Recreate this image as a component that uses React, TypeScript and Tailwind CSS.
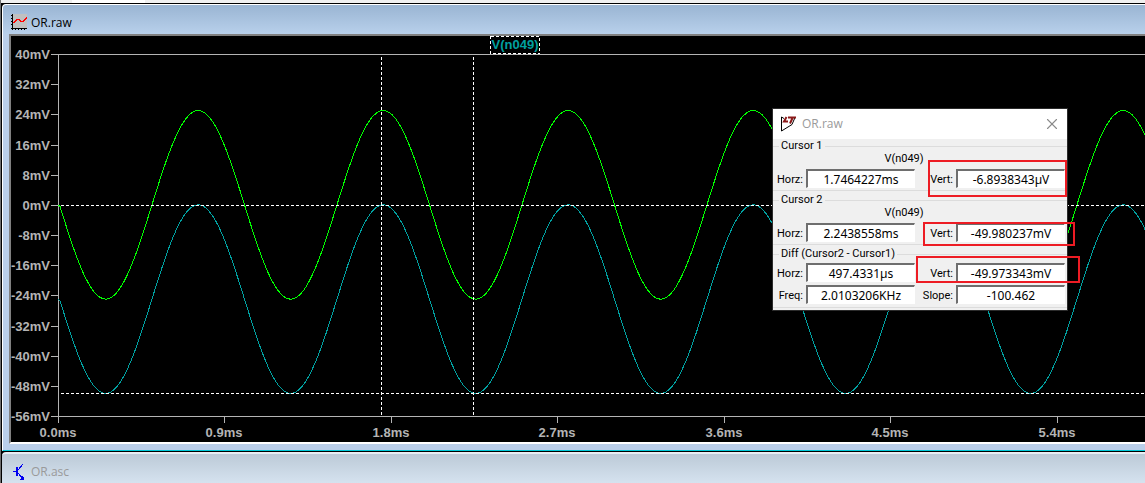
import { X } from 'lucide-react';

const PLOT_LEFT = 47;
const PLOT_TOP = 18;
const PLOT_HEIGHT = 362;
const PX_PER_MS = 185;
const PX_PER_MV = PLOT_HEIGHT / 96;
const SWEEP_MS = 15;

const yOf = (mv: number) => PLOT_TOP + (40 - mv) * PX_PER_MV;
const xOf = (ms: number) => PLOT_LEFT + ms * PX_PER_MS;

const yTicks = Array.from({ length: 13 }, (_, i) => 40 - i * 8);
const xTicks = Array.from({ length: 7 }, (_, i) => i * 0.9);

function trace(f: (ms: number) => number) {
  const points: string[] = [];
  for (let px = 0; px <= SWEEP_MS * PX_PER_MS; px += 2) {
    const ms = px / PX_PER_MS;
    points.push(`${PLOT_LEFT + px},${yOf(f(ms)).toFixed(1)}`);
  }
  return points.join(' ');
}

const phase = (ms: number) => Math.sin(2 * Math.PI * Math.max(0, ms - 0.008));
const greenTrace = trace((ms) => -25 * phase(ms));
const cyanTrace = trace((ms) => -25 - 25 * phase(ms));

function PlotIcon() {
  return (
    <svg className="shrink-0" width="17" height="17" viewBox="0 0 17 17" shapeRendering="crispEdges">
      <rect x="2" y="0" width="14" height="14" fill="#c0c0c0" />
      <path d="M1.5 0V16M0 14.5H16" stroke="#000" />
      <path d="M0 1.5h2M0 4.5h2M0 7.5h2M0 10.5h2M4.5 14v2M7.5 14v2M10.5 14v2M13.5 14v2" stroke="#000" />
      <path d="M2.5 9L6 5.5h2L10 7.5h2L16 4" fill="none" stroke="#f00" strokeWidth="1.5" />
    </svg>
  );
}

function TransistorIcon() {
  return (
    <svg
      className="shrink-0"
      width="17"
      height="17"
      viewBox="0 0 17 17"
      fill="none"
      stroke="#0000f0"
      shapeRendering="crispEdges"
    >
      <path d="M2 7.5h3M7 6l5-6M7 9l5 6" />
      <path d="M6 3v9" strokeWidth="2" />
      <path d="M12.5 15.5h-3l2.5-3z" fill="#0000f0" />
    </svg>
  );
}

function LogoIcon() {
  return (
    <svg className="shrink-0" width="16" height="16" viewBox="0 0 16 16" fill="none">
      <path d="M4 2.5L1.5 1v14L12 8.5l3-7" stroke="#000" />
      <path d="M6.500 1L4 5.500h4" stroke="#8b1a1a" strokeWidth="2" />
      <path d="M8 1.500h8M12.500 2L10 7.500" stroke="#8b1a1a" strokeWidth="2" />
    </svg>
  );
}

function Waveform() {
  return (
    <svg
      className="block h-[406px] w-full bg-black font-['Liberation_Sans',sans-serif] text-[13px] font-bold"
      role="img"
      aria-label="Waveform of V(n049)"
    >
      <g stroke="#b4b4b4" shapeRendering="crispEdges">
        <path d={`M${PLOT_LEFT + 0.5} 18V387M40 18.5H3000M40 380.5H3000`} fill="none" />
        {yTicks.map((mv) => (
          <line key={mv} x1="40" x2="47" y1={Math.round(yOf(mv)) + 0.5} y2={Math.round(yOf(mv)) + 0.5} />
        ))}
        {xTicks.map((ms) => (
          <line key={ms} x1={Math.floor(xOf(ms)) + 0.5} x2={Math.floor(xOf(ms)) + 0.5} y1="380" y2="387" />
        ))}
      </g>
      <g fill="#b4b4b4">
        {yTicks.map((mv) => (
          <text key={mv} x="39" y={Math.round(yOf(mv)) + 5} textAnchor="end">
            {mv}mV
          </text>
        ))}
        {xTicks.map((ms) => (
          <text key={ms} x={Math.floor(xOf(ms))} y="401" textAnchor="middle">
            {ms.toFixed(1)}ms
          </text>
        ))}
      </g>
      <g fill="none" shapeRendering="crispEdges">
        <polyline points={cyanTrace} stroke="#00a0a0" />
        <polyline points={greenTrace} stroke="#00ff00" />
        <path
          d="M50 169.5H3000M50 357.5H3000M370.5 21V380M462.5 21V380"
          stroke="#fff"
          strokeDasharray="3 2"
        />
        <rect x="479.5" y="0.5" width="49" height="17" stroke="#fff" strokeDasharray="3 2" />
      </g>
      <text x="504" y="13" textAnchor="middle" fill="#00a0a0">
        V(n049)
      </text>
    </svg>
  );
}

function Field({ id, label, value }: { id: string; label: string; value: string }) {
  return (
    <>
      <label htmlFor={id} className="pt-[2px] text-right whitespace-nowrap">
        {label}
      </label>
      <input
        id={id}
        readOnly
        defaultValue={value}
        className="h-[19px] w-full border-t-2 border-l-2 border-r border-b border-t-[#6e6e6e] border-l-[#6e6e6e] border-r-white border-b-white bg-white text-center font-['Noto_Sans',sans-serif] text-[12px] text-black outline-none"
      />
    </>
  );
}

const rowClass = 'grid grid-cols-[30px_109px_35px_109px] items-center gap-[3px] leading-[15px]';

function CursorGroup({ n, horz, vert }: { n: number; horz: string; vert: string }) {
  return (
    <fieldset className="border-y border-[#dcdcdc] pb-[2px]">
      <legend className="ml-[6px] px-[2px] leading-3">Cursor {n}</legend>
      <div className="mb-[3px] pr-[32px] text-center leading-[14px]">V(n049)</div>
      <div className={rowClass}>
        <Field id={`horz${n}`} label="Horz:" value={horz} />
        <Field id={`vert${n}`} label="Vert:" value={vert} />
      </div>
    </fieldset>
  );
}

function CursorDialog() {
  return (
    <section
      aria-label="Cursor readout"
      className="absolute top-[73px] left-[762px] w-[294px] bg-[#f0f0f0] font-[Roboto,sans-serif] text-[11px] text-black ring-1 ring-[#2b2b2b]"
    >
      <header className="flex h-[30px] items-center gap-[6px] bg-white pr-[6px] pl-[7px]">
        <LogoIcon />
        <span className="flex-1 font-['Open_Sans',sans-serif] text-[12px] text-[#9a9a9a]">OR.raw</span>
        <button aria-label="Close" className="text-[#8a8a8a]">
          <X size={18} strokeWidth={1.5} />
        </button>
      </header>
      <div className="flex flex-col gap-[3px] pt-px pb-[2px]">
        <CursorGroup n={1} horz="1.7464227ms" vert="-6.8938343µV" />
        <CursorGroup n={2} horz="2.2438558ms" vert="-49.980237mV" />
        <fieldset className="border-y border-[#dcdcdc] pb-[3px]">
          <legend className="ml-[6px] px-[2px] leading-3">Diff (Cursor2 - Cursor1)</legend>
          <div className={`${rowClass} pt-[3px]`}>
            <Field id="horzDiff" label="Horz:" value="497.4331µs" />
            <Field id="vertDiff" label="Vert:" value="-49.973343mV" />
            <Field id="freq" label="Freq:" value="2.0103206KHz" />
            <Field id="slope" label="Slope:" value="-100.462" />
          </div>
        </fieldset>
      </div>
      {/* Highlights around the vertical readings */}
      <div className="pointer-events-none absolute top-[51px] left-[155px] h-[37px] w-[139px] border-2 border-[#ed1c24]" />
      <div className="pointer-events-none absolute top-[113px] left-[150px] h-[24px] w-[152px] border-2 border-[#ed1c24]" />
      <div className="pointer-events-none absolute top-[147px] left-[143px] h-[27px] w-[164px] border-2 border-[#ed1c24]" />
    </section>
  );
}

export default function App() {
  return (
    <div className="flex min-h-screen flex-col overflow-hidden border-l border-[#6e6e6e] bg-black font-['Open_Sans',sans-serif] text-[12px]">
      <div className="h-[3px] bg-[#f0f0f0] pl-[71px]">
        <div className="h-full w-[73px] bg-white" />
      </div>

      <main className="flex flex-1 flex-col pt-px pl-px">
        <section className="rounded-tl border-t border-b border-l border-t-white border-b-[#00c8d8] border-l-white bg-[#bacfea] pb-[6px] pl-[6px]">
          <header className="-ml-[6px] flex h-[29px] items-center gap-[3px] rounded-tl bg-linear-to-b from-[#9ab5d3] to-[#b8d0eb] pt-[6px] pl-2 text-black">
            <PlotIcon />
            <h1>OR.raw</h1>
          </header>
          <div className="relative overflow-hidden border-t-2 border-b-2 border-l-2 border-t-[#808080] border-b-white border-l-[#808080]">
            <Waveform />
            <CursorDialog />
          </div>
        </section>

        <section className="mt-px flex-1 rounded-tl border-t-2 border-[#e8eef4] bg-linear-to-b from-[#bccad7] to-[#d6e3f0]">
          <header className="flex h-[30px] items-center gap-[3px] pt-[6px] pl-[9px] text-[#9a9a9a]">
            <TransistorIcon />
            <h2>OR.asc</h2>
          </header>
        </section>
      </main>
    </div>
  );
}
